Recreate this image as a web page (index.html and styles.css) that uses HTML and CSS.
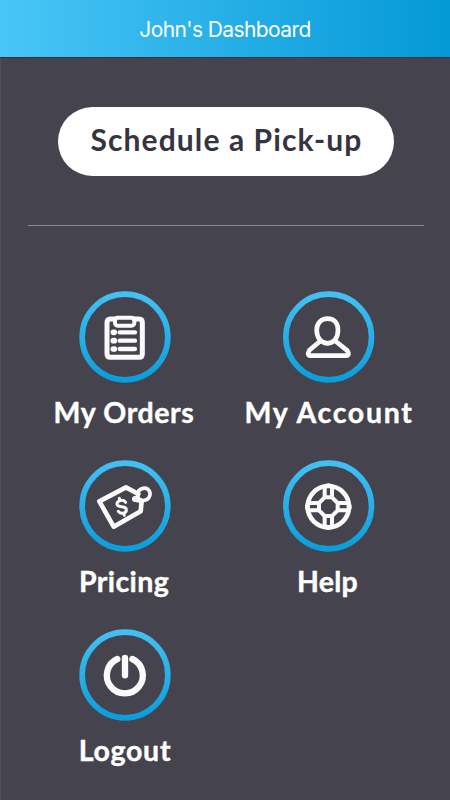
FILE: index.html
```html
<!DOCTYPE html>
<html lang="en">
<head>
<meta charset="utf-8">
<title>John's Dashboard</title>
<link rel="stylesheet" href="styles.css">
</head>
<body>
<header class="topbar"><h1 class="title">John's Dashboard</h1></header>
<main class="content">
  <button class="pickup"><span class="pickup-text">Schedule a Pick-up</span></button>
  <hr class="divider">
  <svg class="defs" width="0" height="0" aria-hidden="true">
    <linearGradient id="ring" x1="0" y1="0" x2="0" y2="1">
      <stop offset="0" stop-color="#43c0f3"/><stop offset="1" stop-color="#0b9edb"/>
    </linearGradient>
  </svg>
  <nav class="menu">
    <a class="item">
      <svg class="icon" viewBox="26 17 276 276">
        <circle class="ring" cx="164" cy="155" r="128.5"/>
        <g class="lines">
          <path d="M134 101H121Q110 101 110 112V205Q110 216 121 216H206Q216 216 216 205V112Q216 101 206 101H192" stroke-width="15"/>
          <rect x="134" y="97" width="58" height="24" rx="8" stroke-width="12"/>
          <path d="M148 141H194M148 166H194M148 191H194" stroke-width="13"/>
          <path d="M129 141H132M129 166H132M129 191H132" stroke-width="17"/>
        </g>
      </svg>
      <span class="label orders">My Orders</span>
    </a>
    <a class="item">
      <svg class="icon" viewBox="27 17 276 276">
        <circle class="ring" cx="164" cy="155" r="128.5"/>
        <g class="lines" stroke-width="14">
          <path d="M161 100C181 100 192 114 192 134C192 158 179 174 161 174C143 174 128 158 128 134C128 114 141 100 161 100Z"/>
          <path d="M139 167L106 195Q97 211 112 211H213Q230 211 219 195L184 167"/>
        </g>
      </svg>
      <span class="label account">My Account</span>
    </a>
    <a class="item">
      <svg class="icon" viewBox="26 17 276 276">
        <circle class="ring" cx="164" cy="155" r="128.5"/>
        <g class="lines" stroke-width="14">
          <path d="M204 119L167 99L87 141L130 217L211 171L214 139"/>
          <path d="M193 134C200 141 214 141 226 137C241 132 243 113 233 105C221 97 205 104 202 117C200 128 204 135 215 139" stroke-width="11"/>
          <circle cx="194" cy="134" r="4" stroke-width="10"/>
          <path d="M166 144C159 133 139 139 140 150C142 163 167 152 168 166C169 177 152 181 144 171M149 139L147 132M160 176L162 183" stroke-width="9"/>
        </g>
      </svg>
      <span class="label pricing">Pricing</span>
    </a>
    <a class="item">
      <svg class="icon" viewBox="27 17 276 276">
        <circle class="ring" cx="164" cy="155" r="128.5"/>
        <g class="lines" stroke-width="14">
          <circle cx="163" cy="157" r="62"/>
          <path d="M152 129H174L191 146V168L174 185H152L135 168V146Z" stroke-width="12"/>
          <path d="M152 129V97Q163 89 174 97V129M152 185V217Q163 225 174 217V185M135 146H103Q95 157 103 168H135M191 146H223Q231 157 223 168H191" stroke-width="12"/>
        </g>
      </svg>
      <span class="label help">Help</span>
    </a>
    <a class="item">
      <svg class="icon" viewBox="26 17 276 276">
        <circle class="ring" cx="164" cy="155" r="128.5"/>
        <g class="lines" stroke-width="19">
          <path d="M141 107A54 54 0 1 0 186 107"/>
          <path d="M164 104V156"/>
        </g>
      </svg>
      <span class="label logout">Logout</span>
    </a>
  </nav>
</main>
</body>
</html>
```
FILE: styles.css
```css
* { box-sizing: border-box; }
body {
  margin: 0;
  width: 450px;
  height: 800px;
  overflow: hidden;
  background: #45444e;
  color: #fff;
  font-family: Lato, "Century Gothic", sans-serif;
}
.topbar {
  height: 58px;
  display: flex;
  align-items: center;
  justify-content: center;
  background: linear-gradient(90deg, #49c6f7, #25aee6 52%, #0499d7);
  border-bottom: 1px solid #35343a;
}
.title {
  margin: 2px 0 0;
  font: 400 21px/28px Inter, sans-serif;
  letter-spacing: -0.6px;
}
.content {
  height: 742px;
  padding: 48.5px 26px 0 27px;
  border-left: 1px solid #504f59;
}
.pickup {
  display: flex;
  align-items: center;
  justify-content: center;
  width: 336px;
  height: 69px;
  margin: 0 0 0 30px;
  padding: 0 0 5px 1px;
  border: 0;
  border-radius: 35px;
  background: #fff;
  color: #35343f;
  font: 700 30px/36px Lato, sans-serif;
}
.pickup-text { white-space: nowrap; letter-spacing: 1.1px; }
.divider {
  height: 1px;
  margin: 49.5px 0 0;
  border: 0;
  background: #8b8a9b;
}
.defs { display: block; }
.menu {
  display: grid;
  grid-template-columns: 204px 204px;
  grid-auto-rows: 169px;
  margin: 65px 0 0 -5px;
}
.item {
  display: flex;
  flex-direction: column;
  align-items: center;
}
.icon { width: 92px; height: 92px; flex: none; }
.ring { fill: none; stroke: url(#ring); stroke-width: 17; }
.lines {
  fill: none;
  stroke: #fafafa;
  stroke-linecap: round;
  stroke-linejoin: round;
}
.label {
  margin-top: 11px;
  padding-right: 2px;
  font-size: 28.5px;
  font-weight: 700;
  line-height: 36px;
  white-space: nowrap;
  -webkit-text-stroke: 0.4px #fff;
}
.orders { letter-spacing: 0.6px; }
.account { letter-spacing: 1.7px; padding-right: 0; }
.pricing { letter-spacing: 0.4px; }
.help { letter-spacing: 0.3px; padding-right: 3px; }
.logout { letter-spacing: 0.7px; padding-right: 0; }
```
